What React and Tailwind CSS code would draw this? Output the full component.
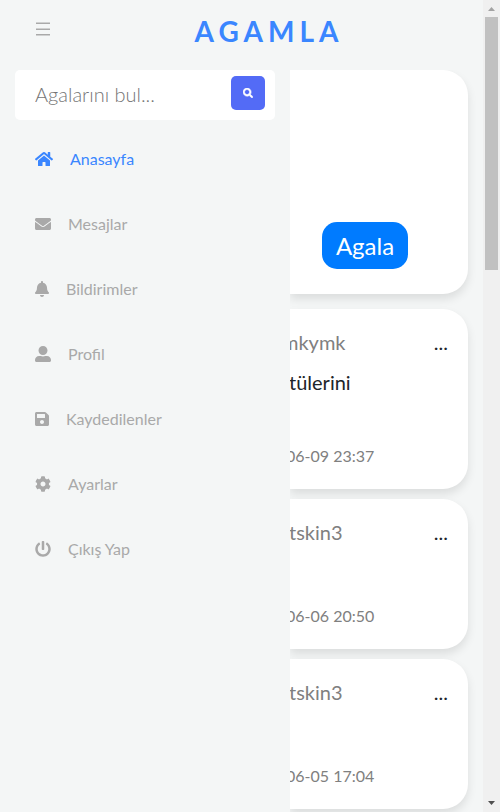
import React from "react";
import {
  FaHome,
  FaEnvelope,
  FaBell,
  FaUserAlt,
  FaSave,
  FaCog,
  FaPowerOff,
  FaSearch,
} from "react-icons/fa";

const links = [
  { label: "Anasayfa", Icon: FaHome, size: "w-[18px]", active: true },
  { label: "Mesajlar", Icon: FaEnvelope, size: "w-4" },
  { label: "Bildirimler", Icon: FaBell, size: "w-[14px]" },
  { label: "Profil", Icon: FaUserAlt, size: "w-4" },
  { label: "Kaydedilenler", Icon: FaSave, size: "w-[14px]" },
  { label: "Ayarlar", Icon: FaCog, size: "w-4" },
  { label: "Çıkış Yap", Icon: FaPowerOff, size: "w-4" },
];

const posts = [
  { name: "mkymk", text: "tülerini", date: "06-09 23:37", height: "min-h-[180px]", inset: "-ml-2" },
  { name: "tskin3", date: "06-06 20:50", height: "min-h-[150px]", inset: "-ml-px" },
  { name: "tskin3", date: "06-05 17:04", height: "min-h-[150px]", inset: "-ml-px" },
];

function Header() {
  return (
    <header className="flex h-[70px] shrink-0 items-start">
      <button type="button" aria-label="Menü" className="flex h-[58px] w-[55px] items-center justify-end pr-1">
        <svg viewBox="0 0 16 14" className="h-[14px] w-4" stroke="#a9a9a9" strokeWidth="1.5" fill="none">
          <path d="M1 1.25h14M1 7.25h14M1 12.750h14" />
        </svg>
      </button>
      <h1 className="flex-1 pt-[11px] text-center text-[28px] leading-10 font-bold tracking-[5px] text-[#3a86ff]">
        AGAMLA
      </h1>
    </header>
  );
}

function Sidebar() {
  return (
    <aside className="w-[290px] shrink-0 px-[15px]">
      <form className="flex h-[50px] items-start rounded-[5px] bg-white pt-[6px] pr-[10px] pl-5">
        <input
          type="text"
          aria-label="Agalarını bul"
          placeholder="Agalarını bul..."
          className="h-9 min-w-0 flex-1 bg-transparent text-xl font-light outline-none placeholder:text-[#757575]"
        />
        <button
          type="button"
          aria-label="Ara"
          className="flex h-[34px] w-[34px] items-center justify-center rounded-[5px] bg-[#536bf6] text-white"
        >
          <FaSearch className="h-[10px] w-[10px]" stroke="currentColor" strokeWidth="30" />
        </button>
      </form>
      <nav className="pt-[6px] pl-5">
        {links.map(({ label, Icon, size, active }) => (
          <a
            key={label}
            href="#"
            className={`flex h-[65px] items-center gap-[17px] text-base ${active ? "text-[#3a86ff]" : "text-[#a9a9a9]"}`}
          >
            <Icon className={`h-4 ${size}`} />
            {label}
          </a>
        ))}
      </nav>
    </aside>
  );
}

function Post({ name, text, date, height, inset }) {
  return (
    <article
      className={`flex flex-col rounded-r-[25px] bg-white pt-[18px] pr-5 pb-[21px] shadow-[0_5px_10px_rgba(0,0,0,0.1)] ${height}`}
    >
      <div className="flex justify-between text-xl leading-[30px]">
        <span className={`text-[#808080] ${inset}`}>{name}</span>
        <button type="button" aria-label="Seçenekler" className="text-[#212529]">
          ...
        </button>
      </div>
      {text && <p className="mt-[10px] -ml-px text-xl leading-[30px] text-[#212529]">{text}</p>}
      <time className="mt-auto -ml-1 text-base leading-6 text-[#808080]">{date}</time>
    </article>
  );
}

function Scrollbar() {
  return (
    <div className="flex w-[17px] shrink-0 flex-col items-center bg-[#f0f0f0]" aria-hidden="true">
      <svg viewBox="0 0 17 17" className="h-[17px] w-[17px] shrink-0">
        <path d="M5 11h7L8.500 7z" fill="#a3a3a3" />
      </svg>
      <div className="h-[253px] w-[13px] bg-[#c1c1c1]" />
      <svg viewBox="0 0 17 17" className="mt-auto h-[17px] w-[17px] shrink-0">
        <path d="M5 6h7L8.500 10z" fill="#505050" />
      </svg>
    </div>
  );
}

export default function App() {
  return (
    <div className="flex h-screen overflow-hidden bg-[#f4f6f6] font-[Lato,sans-serif]">
      <div className="flex min-w-0 flex-1 flex-col">
        <Header />
        <div className="flex min-h-0 flex-1">
          <Sidebar />
          <main className="flex min-w-0 flex-1 flex-col gap-[10px] overflow-hidden pr-[15px]">
            <section className="mb-[5px] flex h-56 shrink-0 items-end justify-end rounded-r-[25px] bg-white pr-[60px] pb-[25px] shadow-[0_5px_10px_rgba(0,0,0,0.1)]">
              <button type="button" className="h-[47px] w-[86px] rounded-[15px] bg-[#007bff] text-2xl text-white">
                Agala
              </button>
            </section>
            {posts.map((post) => (
              <Post key={post.date} {...post} />
            ))}
          </main>
        </div>
      </div>
      <Scrollbar />
    </div>
  );
}
